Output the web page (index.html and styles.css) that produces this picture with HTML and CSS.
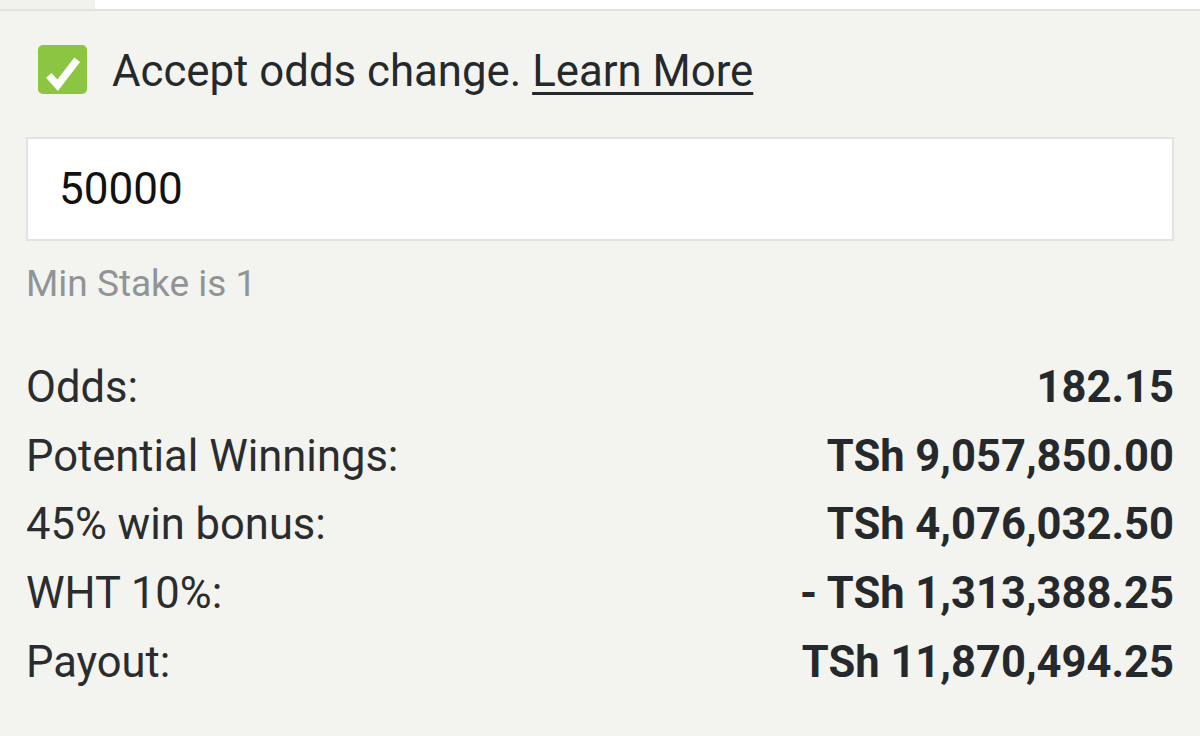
FILE: index.html
```html
<!DOCTYPE html>
<html>
<head>
<meta charset="utf-8">
<link rel="stylesheet" href="styles.css">
</head>
<body>
<div class="topbar">
  <div class="tab-left"></div>
  <div class="tab-right"></div>
</div>
<div class="panel">
  <label class="accept">
    <span class="checkbox">
      <svg viewBox="0 0 50 50" width="50" height="50"><path d="M11 31 L20 41 L40 15" fill="none" stroke="#fff" stroke-width="7.5" stroke-linecap="butt" stroke-linejoin="miter"/></svg>
    </span>
    <span class="accept-text">Accept odds change. <a class="learn" href="#">Learn More</a></span>
  </label>
  <div class="stake-input">50000</div>
  <div class="min-stake">Min Stake is 1</div>
  <div class="summary">
    <div class="row"><span class="label">Odds:</span><span class="value">182.15</span></div>
    <div class="row"><span class="label">Potential Winnings:</span><span class="value">TSh 9,057,850.00</span></div>
    <div class="row"><span class="label">45% win bonus:</span><span class="value">TSh 4,076,032.50</span></div>
    <div class="row"><span class="label">WHT 10%:</span><span class="value">- TSh 1,313,388.25</span></div>
    <div class="row"><span class="label">Payout:</span><span class="value">TSh 11,870,494.25</span></div>
  </div>
</div>
</body>
</html>
```
FILE: styles.css
```css
html, body {
  margin: 0;
  padding: 0;
  background: #f3f3ef;
  font-family: Roboto, "Noto Sans", sans-serif;
  color: #2a2c2e;
}
.topbar {
  display: flex;
  height: 9px;
  border-bottom: 2px solid #e2e2df;
}
.tab-left {
  width: 95px;
  background: #f1f1ed;
}
.tab-right {
  flex: 1;
  background: #ffffff;
}
.panel {
  padding: 0 26px 0 26px;
}
.accept {
  display: flex;
  align-items: center;
  margin-top: 33px;
  margin-left: 12px;
  height: 50px;
}
.checkbox {
  width: 49px;
  height: 49px;
  border-radius: 5px;
  background: #8cc541;
  display: flex;
  align-items: center;
  justify-content: center;
  flex: none;
}
.checkbox svg {
  width: 49px;
  height: 49px;
}
.accept-text {
  margin-left: 25px;
  margin-top: 4px;
  font-size: 43.75px;
  color: #26292b;
}
.learn {
  color: #26292b;
  text-decoration: underline;
  text-decoration-thickness: 3px;
  text-underline-offset: 6px;
}
.stake-input {
  margin-top: 43px;
  background: #fff;
  border: 2px solid #e3e3e0;
  box-sizing: border-box;
  height: 104px;
  display: flex;
  align-items: center;
  padding-left: 31px;
  font-size: 44px;
  color: #111;
}
.min-stake {
  margin-top: 18px;
  font-size: 37px;
  color: #909497;
  line-height: 50px;
}
.summary {
  margin-top: 45px;
}
.row {
  display: flex;
  justify-content: space-between;
  align-items: baseline;
  height: 68.7px;
  font-size: 43.5px;
  line-height: 68.7px;
}
.label {
  color: #2a2c2e;
}
.value {
  font-weight: 700;
  color: #26292b;
}
```
